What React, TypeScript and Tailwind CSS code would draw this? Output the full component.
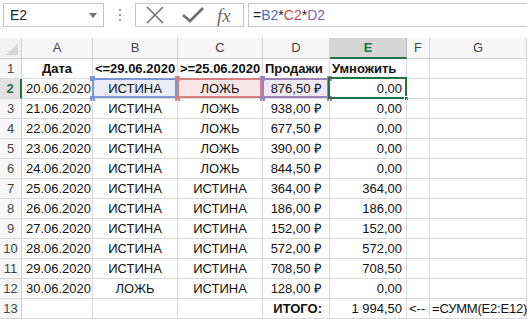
import React from "react";

const cols = ["", "A", "B", "C", "D", "E", "F", "G"];

type Row = [string, string, string, string, string, string, string];

const data: Row[] = [
  ["Дата", "<=29.06.2020", ">=25.06.2020", "Продажи", "Умножить", "", ""],
  ["20.06.2020", "ИСТИНА", "ЛОЖЬ", "876,50 ₽", "0,00", "", ""],
  ["21.06.2020", "ИСТИНА", "ЛОЖЬ", "938,00 ₽", "0,00", "", ""],
  ["22.06.2020", "ИСТИНА", "ЛОЖЬ", "677,50 ₽", "0,00", "", ""],
  ["23.06.2020", "ИСТИНА", "ЛОЖЬ", "390,00 ₽", "0,00", "", ""],
  ["24.06.2020", "ИСТИНА", "ЛОЖЬ", "844,50 ₽", "0,00", "", ""],
  ["25.06.2020", "ИСТИНА", "ИСТИНА", "364,00 ₽", "364,00", "", ""],
  ["26.06.2020", "ИСТИНА", "ИСТИНА", "186,00 ₽", "186,00", "", ""],
  ["27.06.2020", "ИСТИНА", "ИСТИНА", "152,00 ₽", "152,00", "", ""],
  ["28.06.2020", "ИСТИНА", "ИСТИНА", "572,00 ₽", "572,00", "", ""],
  ["29.06.2020", "ИСТИНА", "ИСТИНА", "708,50 ₽", "708,50", "", ""],
  ["30.06.2020", "ЛОЖЬ", "ИСТИНА", "128,00 ₽", "0,00", "", ""],
  ["", "", "", "ИТОГО:", "1 994,50", "<--", "=СУММ(E2:E12)"],
];

const font = { fontFamily: '"Liberation Sans", Arial, sans-serif' };

function Cell({ r, c, v }: { r: number; c: number; v: string }) {
  const base =
    "relative h-[20px] border-r border-b border-[#d9d9d9] text-[13px] leading-[19px] text-[#111] whitespace-nowrap overflow-visible";
  let align = "";
  if (r === 1) {
    align = "text-center font-bold";
    if (c === 4) align = "text-left pl-[2px] font-bold";
    if (c === 5) align = "text-left pl-[2px] font-bold";
  } else if (r === 13) {
    if (c === 4) align = "text-right pr-[7px] font-bold";
    else if (c === 5) align = "text-right pr-[4px]";
    else if (c === 6) align = "text-left pl-[2px]";
    else if (c === 7) align = "text-left pl-[2px] text-[12px] tracking-[-0.2px]";
  } else {
    if (c === 1) align = "text-right pr-[1px]";
    else if (c === 2 || c === 3) align = "text-center";
    else if (c === 4) align = "text-right pr-[7px]";
    else if (c === 5) align = "text-right pr-[4px]";
  }
  let overlay: React.ReactNode = null;
  let bg = "";
  if (r === 2 && c === 2) {
    bg = "bg-[#e8edf8]";
    overlay = <RefBox color="#7a96d6" />;
  } else if (r === 2 && c === 3) {
    bg = "bg-[#f8e6e6]";
    overlay = <RefBox color="#d77f7d" />;
  } else if (r === 2 && c === 4) {
    bg = "bg-[#efe9f5]";
    overlay = <RefBox color="#9b82bd" />;
  } else if (r === 2 && c === 5) {
    overlay = (
      <>
        <div className="absolute left-[-2px] top-[-2px] right-[-1px] bottom-[-1px] border-2 border-[#217346] pointer-events-none" />
        <div className="absolute right-[-3px] bottom-[-3px] w-[5px] h-[5px] bg-[#217346] border border-white" />
      </>
    );
  }
  return (
    <div className={`${base} ${align} ${bg}`}>
      {overlay}
      <span className="relative">{v}</span>
    </div>
  );
}

function RefBox({ color }: { color: string }) {
  return (
    <>
      <div
        className="absolute left-[-1px] top-[-1px] right-[0px] bottom-[0px] border-2 pointer-events-none"
        style={{ borderColor: color }}
      />
      <div className="absolute left-[-3px] top-[-3px] w-[5px] h-[5px]" style={{ background: color }} />
      <div className="absolute right-[-3px] top-[-3px] w-[5px] h-[5px]" style={{ background: color }} />
      <div className="absolute left-[-3px] bottom-[-3px] w-[5px] h-[5px]" style={{ background: color }} />
      <div className="absolute right-[-3px] bottom-[-3px] w-[5px] h-[5px]" style={{ background: color }} />
    </>
  );
}

export default function App() {
  return (
    <div className="w-[527px] h-[319px] bg-white overflow-hidden" style={font}>
      {/* formula bar */}
      <div className="flex items-start h-[38px] pt-[3px] bg-white">
        <div className="ml-[3px] w-[101px] h-[24px] border border-[#c6c6c6] flex items-center justify-between pl-[6px] pr-[6px]">
          <span className="text-[14px] text-[#222]">E2</span>
          <svg width="8" height="5" viewBox="0 0 8 5">
            <path d="M0 0 L8 0 L4 5 Z" fill="#6e6e6e" />
          </svg>
        </div>
        <div className="w-[31px] h-[24px] flex flex-col items-center justify-center gap-[3px]">
          <div className="w-[2px] h-[2px] bg-[#a0a0a0]" />
          <div className="w-[2px] h-[2px] bg-[#a0a0a0]" />
          <div className="w-[2px] h-[2px] bg-[#a0a0a0]" />
        </div>
        <div className="w-[109px] h-[24px] border border-[#c6c6c6] flex items-center">
          <svg className="ml-[9px]" width="20" height="18" viewBox="0 0 20 18">
            <path d="M2 1 L18 17 M18 1 L2 17" stroke="#727272" strokeWidth="1.6" />
          </svg>
          <svg className="ml-[17px]" width="22" height="16" viewBox="0 0 22 16">
            <path d="M1 8 L8 14 L21 1" stroke="#727272" strokeWidth="2.8" fill="none" />
          </svg>
          <span
            className="ml-[13px] text-[19px] italic text-[#6a6a6a] leading-none"
            style={{ fontFamily: '"Liberation Serif", "Times New Roman", serif' }}
          >
            fx
          </span>
        </div>
        <div className="ml-[4px] flex-1 h-[24px] border border-[#c6c6c6] border-r-0 flex items-center pl-[4px] text-[14px]">
          <span className="text-[#222]">=</span>
          <span className="text-[#4a72c8]">B2</span>
          <span className="text-[#222]">*</span>
          <span className="text-[#c0504d]">C2</span>
          <span className="text-[#222]">*</span>
          <span className="text-[#8064a2]">D2</span>
        </div>
      </div>
      {/* grid */}
      <div className="grid grid-cols-[22px_71px_85px_85px_67px_77px_23px_97px]">
        {cols.map((c, i) => {
          if (i === 0)
            return (
              <div key={i} className="relative h-[21px] bg-[#f2f2f2] border-r border-b border-[#d0d0d0]">
                <svg className="absolute right-[3px] bottom-[3px]" width="12" height="12" viewBox="0 0 12 12">
                  <path d="M12 0 L12 12 L0 12 Z" fill="#d6d6d6" />
                </svg>
              </div>
            );
          const sel = c === "E";
          return (
            <div
              key={i}
              className={`h-[21px] flex items-center justify-center text-[13px] border-r ${
                sel
                  ? "bg-[#d6d6d6] text-[#217346] font-bold border-b-2 border-b-[#217346] border-r-[#b8b8b8]"
                  : "bg-[#f7f7f7] text-[#444] border-b border-[#d0d0d0]"
              }`}
            >
              {c}
            </div>
          );
        })}
        {data.map((row, ri) => {
          const r = ri + 1;
          const selRow = r === 2;
          return (
            <React.Fragment key={r}>
              <div
                className={`h-[20px] flex items-center justify-center text-[13px] border-b border-[#d9d9d9] ${
                  selRow
                    ? "bg-[#e1e1e1] text-[#217346] font-bold border-r-2 border-r-[#217346]"
                    : "bg-[#f7f7f7] text-[#444] border-r border-r-[#d0d0d0]"
                }`}
              >
                {r}
              </div>
              {row.map((v, ci) => (
                <Cell key={ci} r={r} c={ci + 1} v={v} />
              ))}
            </React.Fragment>
          );
        })}
      </div>
    </div>
  );
}
